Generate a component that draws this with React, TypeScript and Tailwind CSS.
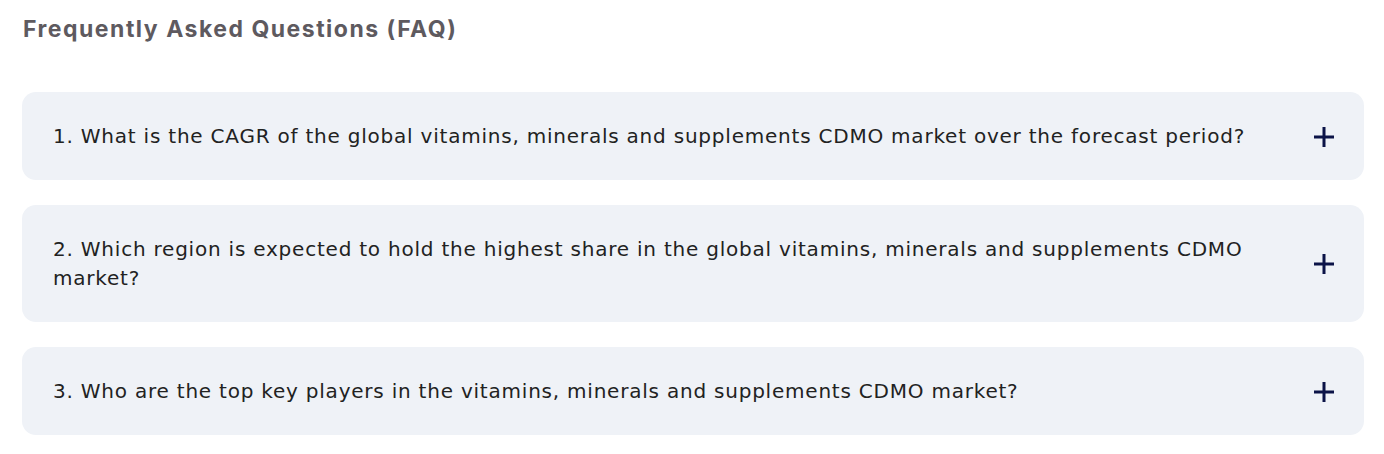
import React from "react";

const faqs = [
  "1. What is the CAGR of the global vitamins, minerals and supplements CDMO market over the forecast period?",
  "2. Which region is expected to hold the highest share in the global vitamins, minerals and supplements CDMO market?",
  "3. Who are the top key players in the vitamins, minerals and supplements CDMO market?",
];

function Plus() {
  return (
    <svg width="22" height="22" viewBox="0 0 22 22" className="shrink-0">
      <path d="M11 1v20M1 11h20" stroke="#0b1347" strokeWidth="3" />
    </svg>
  );
}

export default function App() {
  return (
    <div className="w-[1384px] h-[454px] bg-white pl-[22px] pr-[20px] pt-[14px]">
      <h2
        className="text-[23px] font-bold text-[#5e5a5f] leading-[30px] pl-[1px] tracking-[1.5px]"
        style={{ fontFamily: "Inter, sans-serif" }}
      >
        Frequently Asked Questions (FAQ)
      </h2>
      <div className="mt-[48px] flex flex-col gap-[25px]">
        {faqs.map((q) => (
          <div
            key={q}
            className="bg-[#eff2f7] rounded-[14px] pl-[31px] pr-[29px] pt-[30px] pb-[29px] flex items-center justify-between gap-[60px]"
          >
            <span
              className="text-[20px] leading-[29px] text-[#222222] tracking-[0.78px]"
              style={{ fontFamily: '"DejaVu Sans", sans-serif' }}
            >
              {q}
            </span>
            <Plus />
          </div>
        ))}
      </div>
    </div>
  );
}
